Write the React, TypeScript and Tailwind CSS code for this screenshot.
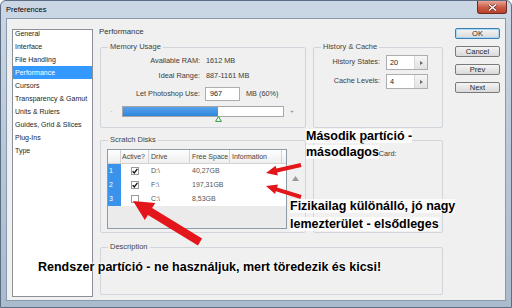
import React from "react";

const categories = [
  "General",
  "Interface",
  "File Handling",
  "Performance",
  "Cursors",
  "Transparency & Gamut",
  "Units & Rulers",
  "Guides, Grid & Slices",
  "Plug-Ins",
  "Type",
];

const disks = [
  { n: 1, on: true, drive: "D:\\", free: "40,27GB" },
  { n: 2, on: true, drive: "F:\\", free: "197,31GB" },
  { n: 3, on: false, drive: "C:\\", free: "8,53GB" },
];

// polygon for a fat annotation arrow, from tail (x1,y1) to tip (x2,y2)
function arrow(x1: number, y1: number, x2: number, y2: number, shaft: number, head: number, headLen: number) {
  const len = Math.hypot(x2 - x1, y2 - y1);
  const ux = (x2 - x1) / len;
  const uy = (y2 - y1) / len;
  const px = -uy;
  const py = ux;
  const bx = x2 - ux * headLen;
  const by = y2 - uy * headLen;
  const pts = [
    [x1 + (px * shaft) / 2, y1 + (py * shaft) / 2],
    [bx + (px * shaft) / 2, by + (py * shaft) / 2],
    [bx + (px * head) / 2, by + (py * head) / 2],
    [x2, y2],
    [bx - (px * head) / 2, by - (py * head) / 2],
    [bx - (px * shaft) / 2, by - (py * shaft) / 2],
    [x1 - (px * shaft) / 2, y1 - (py * shaft) / 2],
  ];
  return pts.map((p) => p.map((v) => v.toFixed(1)).join(",")).join(" ");
}

function Spinner({ value }: { value: string }) {
  return (
    <div className="ml-[6px] flex h-[15px] w-[42px] border border-[#abadb3] bg-white">
      <span className="flex-1 pl-[3px] leading-[13px] text-[#222]">{value}</span>
      <span className="flex w-[13px] items-center justify-center border-l border-[#d9d9d9] bg-gradient-to-b from-[#f6f6f6] to-[#e2e2e2]">
        <svg width="3" height="4" viewBox="0 0 3 4">
          <path d="M0 0 L3 2 L0 4 Z" fill="#6b6b6b" />
        </svg>
      </span>
    </div>
  );
}

function Button({ label, primary }: { label: string; primary?: boolean }) {
  return (
    <div
      className={
        "h-[11px] w-[45px] rounded-[2px] border bg-gradient-to-b from-[#f4f4f4] to-[#d9d9d9] text-center text-[7.5px] leading-[9px] text-[#2a2a2a] " +
        (primary ? "border-[#3c7fb1] shadow-[inset_0_0_0_1px_#a9d8f5]" : "border-[#7a7a7a]")
      }
    >
      {label}
    </div>
  );
}

function Check() {
  return (
    <svg width="6" height="6" viewBox="0 0 6 6">
      <path d="M0.6 3.2 L2.3 4.9 L5.4 0.8" fill="none" stroke="#111" strokeWidth="1.3" />
    </svg>
  );
}

const groupBox = "rounded-[2px] border border-[#cfd5db]";
const legend = "ml-[7px] px-[2px] text-[7.5px] leading-[10px] text-[#444]";

export default function App() {
  return (
    <div className="relative h-[308px] w-[512px] overflow-hidden rounded-t-[6px] border border-[#5b6e84] bg-gradient-to-b from-[#cbd7e4] via-[#b8c7d8] to-[#aabbce] font-['Liberation_Sans',Arial,sans-serif] text-[7.3px] text-[#3c3c3c]">
      {/* title bar */}
      <div className="flex h-[17px] items-start justify-between">
        <span className="pl-[5px] pt-[4px] text-[7.5px] leading-[9px] text-black">Preferences</span>
        <div className="mr-[4px] flex h-[13px] w-[30px] items-center justify-center rounded-b-[3px] border border-t-0 border-[#6b2b22] bg-gradient-to-b from-[#e7a697] via-[#cd5e49] to-[#b7402c]">
          <svg width="9" height="7" viewBox="0 0 9 7">
            <path d="M1 0.5 L8 6.5 M8 0.5 L1 6.5" stroke="#5a1d16" strokeWidth="2.6" />
            <path d="M1 0.5 L8 6.5 M8 0.5 L1 6.5" stroke="#fff" strokeWidth="1.5" />
          </svg>
        </div>
      </div>

      {/* client area */}
      <div className="mx-[5px] flex h-[283px] border border-[#8799ad] bg-[#f0f0f0] pl-[5px] pt-[8px]">
        {/* category list */}
        <div className="mt-[2px] h-[268px] w-[81px] border border-[#8a8f98] bg-white">
          <div className="-mt-[3px] flex flex-col">
            {categories.map((c) => (
              <div
                key={c}
                className={
                  "h-[13px] pl-[2px] text-[7px] leading-[13px] " +
                  (c === "Performance" ? "bg-[#3399ff] text-white" : "text-[#1e1e1e]")
                }
              >
                {c}
              </div>
            ))}
          </div>
        </div>

        {/* settings */}
        <div className="ml-[7px] flex w-[343px] flex-col">
          <div className="-ml-[1px] h-[10px] text-[7.8px] leading-[10px] text-[#333]">Performance</div>

          <div className="mt-[5px] flex gap-[7px]">
            <fieldset className={"h-[86px] w-[206px] " + groupBox}>
              <legend className={legend}>Memory Usage</legend>
              <div className="mt-[3px] flex h-[12px] items-center">
                <span className="w-[99px] text-right">Available RAM:</span>
                <span className="ml-[6px]">1612 MB</span>
              </div>
              <div className="mt-[3px] flex h-[12px] items-center">
                <span className="w-[99px] text-right">Ideal Range:</span>
                <span className="ml-[6px]">887-1161 MB</span>
              </div>
              <div className="mt-[5px] flex h-[14px] items-center">
                <span className="w-[99px] text-right">Let Photoshop Use:</span>
                <div className="ml-[5px] h-[14px] w-[35px] border border-[#abadb3] bg-white pl-[4px] leading-[12px] text-[#222]">
                  967
                </div>
                <span className="ml-[6px]">MB (60%)</span>
              </div>
              <div className="mt-[5px] flex h-[11px] items-center">
                <span className="w-[21px] text-center text-[6px] text-[#999]">-</span>
                <div className="relative h-[11px] w-[162px] border border-[#a7a7a7] bg-white">
                  <div className="h-full w-[95px] bg-gradient-to-b from-[#55a2ec] to-[#2f86dc]" />
                  <svg className="absolute left-[92px] top-[9px]" width="7" height="6" viewBox="0 0 7 6">
                    <path d="M3.5 0.6 L6.4 5.4 L0.6 5.4 Z" fill="#fff" stroke="#2f9a3a" strokeWidth="1" />
                  </svg>
                </div>
                <span className="w-[16px] text-center text-[6px] text-[#777]">+</span>
              </div>
            </fieldset>

            <fieldset className={"h-[86px] w-[130px] " + groupBox}>
              <legend className={legend}>History &amp; Cache</legend>
              <div className="mt-[3px] flex h-[15px] items-center">
                <span className="w-[66px] text-right">History States:</span>
                <Spinner value="20" />
              </div>
              <div className="mt-[4px] flex h-[15px] items-center">
                <span className="w-[66px] text-right">Cache Levels:</span>
                <Spinner value="4" />
              </div>
            </fieldset>
          </div>

          <div className="mt-[7px] flex gap-[7px]">
            <fieldset className={"h-[98px] w-[206px] " + groupBox}>
              <legend className={legend}>Scratch Disks</legend>
              <div className="flex items-start">
                <div className="ml-[6px] mt-[4px] flex h-[80px] w-[180px] flex-col border border-[#8e9aa6] bg-[#ebebeb] text-[7px]">
                  <div className="flex h-[14px] border-b border-[#d3d3d3] bg-gradient-to-b from-white to-[#eeeeee] leading-[13px] text-[#444]">
                    <span className="w-[13px] border-r border-[#d3d3d3]" />
                    <span className="w-[28px] border-r border-[#d3d3d3] pl-[1px]">Active?</span>
                    <span className="w-[41px] border-r border-[#d3d3d3] pl-[2px]">Drive</span>
                    <span className="w-[40px] border-r border-[#d3d3d3] pl-[2px]">Free Space</span>
                    <span className="w-[52px] border-r border-[#d3d3d3] pl-[2px]">Information</span>
                  </div>
                  {disks.map((d) => (
                    <div key={d.n} className="flex h-[14px] items-center bg-white leading-[14px] text-[#555]">
                      <span className="h-full w-[13px] bg-[#3993ea] pl-[1px] text-white">{d.n}</span>
                      <span className="flex w-[28px] justify-center">
                        <span className="flex h-[8px] w-[8px] items-center justify-center border border-[#9a9a9a] bg-white">
                          {d.on && <Check />}
                        </span>
                      </span>
                      <span className="w-[41px] pl-[2px]">{d.drive}</span>
                      <span className="w-[40px] pl-[2px]">{d.free}</span>
                      <span className="flex-1" />
                    </div>
                  ))}
                </div>
                <div className="ml-[5px] mt-[31px]">
                  <svg width="7" height="5" viewBox="0 0 7 5">
                    <path d="M3.5 0 L7 5 L0 5 Z" fill="#9a9a9a" />
                  </svg>
                </div>
              </div>
            </fieldset>

            <fieldset className={"h-[98px] w-[130px] " + groupBox}>
              <legend className={legend}>GPU Settings</legend>
              <div className="ml-[13px] mt-[4px] h-[10px] leading-[10px]">Detected Video Card:</div>
            </fieldset>
          </div>

          <fieldset className={"mt-[9px] h-[53px] w-[343px] " + groupBox}>
            <legend className={legend}>Description</legend>
          </fieldset>
        </div>

        {/* dialog buttons */}
        <div className="ml-[12px] mt-[1px] flex flex-col gap-[7px]">
          <Button label="OK" primary />
          <Button label="Cancel" />
          <Button label="Prev" />
          <Button label="Next" />
        </div>
      </div>

      {/* annotations */}
      <div className="absolute left-[305px] top-[128px] text-[12.5px] font-bold leading-[15.5px] text-black">
        <div>
          <span className="bg-white/85">Második partíció -</span>
        </div>
        <div>
          <span className="bg-white/85">másodlagos</span>
        </div>
      </div>
      <div className="absolute left-[289px] top-[196px] text-[12.5px] font-bold leading-[18px] text-black">
        <div>
          <span className="bg-white/75">Fizikailag különálló, jó nagy</span>
        </div>
        <div>
          <span className="bg-white/75">lemezterület - elsődleges</span>
        </div>
      </div>
      <div className="absolute left-[37px] top-[259px] whitespace-nowrap text-[12.5px] font-bold leading-[15px] text-black [text-shadow:0_0_3px_#fff,0_0_3px_#fff,0_0_3px_#fff]">
        Rendszer partíció - ne használjuk, mert töredezik és kicsi!
      </div>

      <svg className="pointer-events-none absolute left-0 top-0" width="512" height="308" viewBox="0 0 512 308">
        <polygon points={arrow(300, 164, 265, 172, 4, 10, 11)} fill="#e3161b" />
        <polygon points={arrow(300, 196, 265, 185, 4, 10, 11)} fill="#e3161b" />
        <polygon points={arrow(199, 241, 132, 200, 8, 20, 20)} fill="#e3161b" />
      </svg>
    </div>
  );
}
